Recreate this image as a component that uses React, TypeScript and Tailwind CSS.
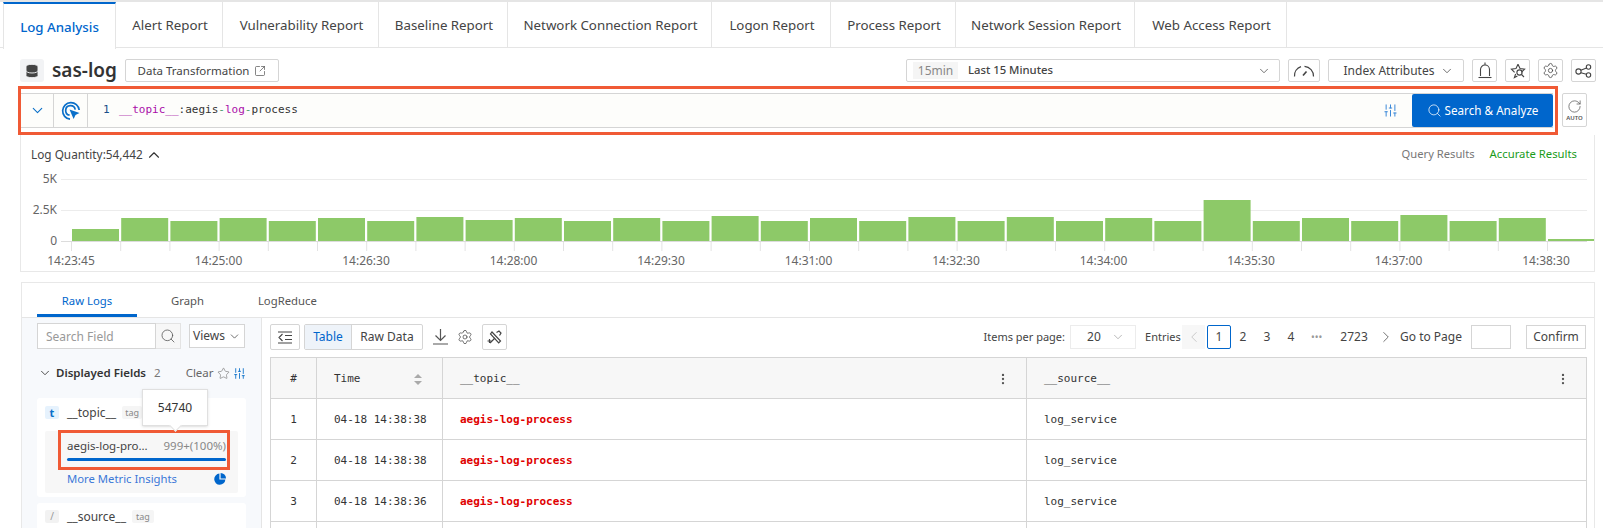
import { ChevronDown, ChevronLeft, ChevronRight, ChevronUp, Database, EllipsisVertical, Search, Settings, SlidersVertical, SquareArrowOutUpRight, Star, RotateCw } from 'lucide-react';

const ui = "font-['Noto_Sans',sans-serif]";
const mono = "font-['DejaVu_Sans_Mono','Liberation_Mono',monospace]";

const tabs = [
  { label: 'Log Analysis', w: 'w-[113px]' },
  { label: 'Alert Report', w: 'w-[107px]' },
  { label: 'Vulnerability Report', w: 'w-[156px]' },
  { label: 'Baseline Report', w: 'w-[129px]' },
  { label: 'Network Connection Report', w: 'w-[204px]' },
  { label: 'Logon Report', w: 'w-[119px]' },
  { label: 'Process Report', w: 'w-[125px]' },
  { label: 'Network Session Report', w: 'w-[179px]' },
  { label: 'Web Access Report', w: 'w-[152px]' },
];

const barHeights = [12, 23, 20, 23, 20, 23, 20, 24, 21, 23, 20, 23, 20, 25, 20, 23, 20, 24, 20, 24, 20, 23, 20, 41, 20, 23, 20, 26, 20, 23, 2];

const timeLabels = ['14:23:45', '14:25:00', '14:26:30', '14:28:00', '14:29:30', '14:31:00', '14:32:30', '14:34:00', '14:35:30', '14:37:00', '14:38:30'];

const rows = [
  { n: 1, time: '04-18 14:38:38' },
  { n: 2, time: '04-18 14:38:38' },
  { n: 3, time: '04-18 14:38:36' },
  { n: 4, time: '' },
];

function IconButton({ children, w = 'w-[25px]' }: { children: React.ReactNode; w?: string }) {
  return (
    <div className={`${w} h-[23px] flex items-center justify-center border border-[#d5d5d5] rounded-[2px] text-[#444]`}>
      {children}
    </div>
  );
}

function TargetCursor() {
  return (
    <svg width="20" height="20" viewBox="0 0 20 20" fill="none" stroke="#0a6fc9" strokeWidth="1.7">
      <path d="M9 18.2A8.3 8.3 0 1 1 18.2 9" />
      <path d="M8.6 14.2A4.8 4.8 0 1 1 14.2 8.6" />
      <path d="M8.5 8.5l10 3.6-4 1.8-1.9 4z" fill="#0a6fc9" stroke="none" />
    </svg>
  );
}

function GaugeIcon() {
  return (
    <svg width="22" height="14" viewBox="0 0 22 14" fill="none" stroke="#444" strokeWidth="1.2">
      <path d="M1.5 12.5A9.7 9.7 0 0 1 8 2.6M11.5 2.3A9.7 9.7 0 0 1 20.5 12.5" />
      <path d="M10 11.5l3.5-4" strokeWidth="1.7" />
    </svg>
  );
}

function BellIcon() {
  return (
    <svg width="14" height="17" viewBox="0 0 14 17" fill="none" stroke="#444" strokeWidth="1.1">
      <path d="M7 .5v2M2.5 14V7.5a4.5 4.5 0 0 1 9 0V14" />
      <path d="M.5 15.5h13" />
    </svg>
  );
}

function StarSearch() {
  return (
    <svg width="16" height="16" viewBox="0 0 16 16" fill="none" stroke="#444" strokeWidth="1.1">
      <path d="M8 1.2l2 4.3 4.6.6-3.3 3.2M5.6 11l-1.2 3.5 3-1.6M4.6 9.3L1.4 6.1 6 5.5 8 1.2" />
      <circle cx="9.5" cy="9.5" r="2.6" />
      <path d="M11.5 11.5l2.5 2.5" />
    </svg>
  );
}

function ShareIcon() {
  return (
    <svg width="17" height="14" viewBox="0 0 17 14" fill="none" stroke="#444" strokeWidth="1.1">
      <circle cx="3.5" cy="7.5" r="2.6" />
      <circle cx="13.5" cy="3" r="2.2" />
      <circle cx="13.5" cy="11" r="2.2" />
      <path d="M5.8 6.3l5.7-2.4M5.9 8.7l5.5 1.6" />
    </svg>
  );
}

function CollapseIcon() {
  return (
    <svg width="14" height="13" viewBox="0 0 14 13" fill="none" stroke="#444" strokeWidth="1.1">
      <path d="M0 1h14M0 12h14M7 4.5h7M7 8.5h7M4.5 3L1 6.5 4.5 10" />
    </svg>
  );
}

function DownloadIcon() {
  return (
    <svg width="15" height="16" viewBox="0 0 15 16" fill="none" stroke="#555" strokeWidth="1.2">
      <path d="M7.5 0v11M2.5 6.5l5 5 5-5M0 15h15" />
    </svg>
  );
}

function ToolsIcon() {
  return (
    <svg width="15" height="15" viewBox="0 0 15 15" fill="none" stroke="#444" strokeWidth="1.2">
      <path d="M5 2l8.5 9-1.8 1.8L3.5 4z" />
      <path d="M9.5 2.5l2.5-1.5 2 2-1.5 2.5M3 13l5-5" />
      <path d="M2.5 9v4M.5 11h4" />
    </svg>
  );
}

function Chart() {
  return (
    <svg width="1573" height="103" viewBox="0 0 1573 103" className="block">
      {[0, 31, 62].map((y) => (
        <line key={y} x1="40" x2="1566" y1={y + 10.5} y2={y + 10.5} stroke={y === 62 ? '#dcdcdc' : '#ececec'} />
      ))}
      {['5K', '2.5K', '0'].map((t, i) => (
        <text key={t} x="36" y={[14, 45, 76][i]} textAnchor="end" fontSize="12" fill="#666" fontFamily="Noto Sans">
          {t}
        </text>
      ))}
      {barHeights.map((h, i) => (
        <rect key={i} x={51 + i * 49.2} y={72 - h} width="47" height={h} fill="#8dc968" />
      ))}
      {barHeights.map((_, i) => (
        <line key={i} x1={50.5 + i * 49.2} x2={50.5 + i * 49.2} y1="73" y2="82" stroke="#e3e3e3" />
      ))}
      {timeLabels.map((t, i) => (
        <text key={t} x={50 + i * 147.5} y="96" textAnchor="middle" fontSize="12" fill="#666" fontFamily="Noto Sans">
          {t}
        </text>
      ))}
    </svg>
  );
}

function Sidebar() {
  return (
    <div className="w-[240px] h-full bg-[#f7f9fc] border-r border-[#e5e5e5] pl-[15px] pr-[15px] shrink-0">
      <div className="flex pt-[5px]">
        <div className="w-[119px] h-[26px] bg-white border border-[#d5d5d5] pl-[8px] text-[12px] leading-[25px] text-[#999]">Search Field</div>
        <div className="w-[25px] h-[26px] bg-[#f7f7f7] border border-l-0 border-[#e3e3e3] flex items-center justify-center">
          <Search size={16} strokeWidth={1.2} color="#555" />
        </div>
        <div className="ml-[8px] mt-[1px] w-[56px] h-[24px] bg-white border border-[#d5d5d5] flex items-center justify-center gap-[3px] text-[12px] text-[#444]">
          Views <ChevronDown size={13} strokeWidth={1.4} />
        </div>
      </div>
      <div className="flex items-center h-[20px] mt-[14px] text-[11.5px] whitespace-nowrap">
        <ChevronDown size={14} strokeWidth={1.6} color="#444" className="ml-[1px]" />
        <span className="ml-[4px] font-semibold text-[#333]">Displayed Fields</span>
        <span className="ml-[8px] text-[#777]">2</span>
        <span className="ml-[25px] text-[#666]">Clear</span>
        <Star size={13} strokeWidth={1.2} color="#777" className="ml-[3px]" />
        <SlidersVertical size={13} strokeWidth={1.6} color="#0a6fc9" className="ml-[3px]" />
      </div>
      <div className="relative mt-[15px] h-[99px] bg-white rounded-[3px] pl-[8px] pr-[8px] pt-[8px]">
        <div className="flex items-center h-[13px] text-[12px] text-[#444]">
          <span className="w-[14px] h-[13px] rounded-[2px] bg-[#e6f2fd] text-[#0a6fc9] font-bold text-[11px] leading-[13px] text-center">t</span>
          <span className="ml-[8px]">__topic__</span>
          <span className="ml-[6px] px-[3px] bg-[#f5f5f5] rounded-[2px] text-[9px] leading-[13px] text-[#888]">tag</span>
        </div>
        <div className="relative mt-[12px] h-[62px] bg-[#f7f7f7] rounded-[2px] pl-[22px] pr-[12px]">
          <div className="flex justify-between h-[27px] items-center pt-[3px] text-[11.5px] text-[#555]">
            <span className="text-[#444]">aegis-log-pro...</span>
            <span className="text-[#888]">999+(100%)</span>
          </div>
          <div className="h-[3px] bg-[#0066cc] rounded-full" />
          <div className="flex justify-between items-center mt-[10px] text-[11.3px] text-[#3b78d8]">
            <span>More Metric Insights</span>
            <svg width="12" height="12" viewBox="0 0 12 12" fill="#0066cc">
              <path d="M5.4.6A5.6 5.6 0 1 0 11.4 6.6H5.4z" />
              <path d="M6.6 0A5.4 5.4 0 0 1 12 5.4H6.6z" />
            </svg>
          </div>
          <div className="absolute left-[13px] top-[-1px] w-[172px] h-[40px] border-[3px] border-[#f05a35]" />
        </div>
        <div className="absolute left-[105px] top-[-9px] w-[66px] h-[37px] bg-white border border-[#e0e0e0] shadow-sm flex items-center justify-center text-[12px] text-[#333]">
          54740
          <span className="absolute left-[28px] bottom-[-5px] w-[9px] h-[9px] rotate-45 bg-white border-r border-b border-[#e0e0e0]" />
        </div>
      </div>
      <div className="mt-[6px] h-[40px] bg-white rounded-[3px] pl-[8px] pt-[7px]">
        <div className="flex items-center h-[13px] text-[12px] text-[#444]">
          <span className="w-[14px] h-[13px] rounded-[2px] bg-[#f2f2f2] text-[#999] text-[10px] leading-[13px] text-center">/</span>
          <span className="ml-[8px]">__source__</span>
          <span className="ml-[6px] px-[4px] bg-[#f5f5f5] rounded-[2px] text-[9px] leading-[13px] text-[#888]">tag</span>
        </div>
      </div>
    </div>
  );
}

function Pagination() {
  return (
    <div className="ml-auto flex items-center text-[12px] text-[#444] h-[24px] mr-[8px]">
      <span className="text-[11px]">Items per page:</span>
      <div className="ml-[5px] w-[66px] h-[24px] border border-[#ececec] flex items-center justify-between pl-[16px] pr-[10px]">
        20 <ChevronDown size={14} strokeWidth={1} color="#888" />
      </div>
      <span className="ml-[9px] w-[37px] text-[11px]">Entries</span>
      <div className="ml-[0px] w-[23px] h-[24px] bg-[#f7f7f7] flex items-center justify-center">
        <ChevronLeft size={18} strokeWidth={1} color="#bbb" />
      </div>
      <div className="ml-[2px] w-[24px] h-[24px] border border-[#0066cc] rounded-[2px] text-center leading-[22px]">1</div>
      <span className="w-[24px] text-center">2</span>
      <span className="w-[24px] text-center">3</span>
      <span className="w-[24px] text-center">4</span>
      <span className="w-[27px] text-center text-[#999] text-[10px]">•••</span>
      <span className="ml-[9px] w-[30px] text-center">2723</span>
      <ChevronRight size={18} strokeWidth={1.1} color="#555" className="ml-[8px]" />
      <span className="ml-[5px]">Go to Page</span>
      <div className="ml-[9px] w-[40px] h-[24px] border border-[#d5d5d5]" />
      <div className="ml-[15px] w-[60px] h-[24px] border border-[#d5d5d5] text-center leading-[22px]">Confirm</div>
    </div>
  );
}

function LogTable() {
  return (
    <table className={`${mono} table-fixed border-collapse w-[1316px] mt-[7px] text-[11px] text-[#333]`}>
      <colgroup>
        <col className="w-[46px]" />
        <col className="w-[126px]" />
        <col className="w-[584px]" />
        <col className="w-[560px]" />
      </colgroup>
      <thead>
        <tr className="h-[41px] bg-[#f7f7f7] text-left">
          <th className="border border-[#d5d5d5] font-normal text-center pt-[2px]">#</th>
          <th className="border border-[#d5d5d5] font-normal pl-[17px] pt-[2px]">
            <div className="flex items-center justify-between pr-[20px]">
              Time
              <svg width="8" height="11" viewBox="0 0 8 11" fill="#aaa">
                <path d="M4 0l4 4H0zM4 11L0 7h8z" />
              </svg>
            </div>
          </th>
          <th className="border border-[#d5d5d5] font-normal pl-[17px] pt-[2px]">
            <div className="flex items-center justify-between pr-[16px]">
              __topic__
              <EllipsisVertical size={14} color="#555" />
            </div>
          </th>
          <th className="border border-[#d5d5d5] font-normal pl-[17px] pt-[2px]">
            <div className="flex items-center justify-between pr-[16px]">
              __source__
              <EllipsisVertical size={14} color="#555" />
            </div>
          </th>
        </tr>
      </thead>
      <tbody>
        {rows.map((r) => (
          <tr key={r.n} className="h-[41px]">
            <td className="border border-[#d5d5d5] text-center pt-[2px]">{r.time ? r.n : ''}</td>
            <td className="border border-[#d5d5d5] pl-[17px] pt-[2px]">{r.time}</td>
            <td className="border border-[#d5d5d5] pl-[17px] pt-[2px] font-bold text-[#e00000]">{r.time ? 'aegis-log-process' : ''}</td>
            <td className="border border-[#d5d5d5] pl-[17px] pt-[2px]">{r.time ? 'log_service' : ''}</td>
          </tr>
        ))}
      </tbody>
    </table>
  );
}

export default function App() {
  return (
    <div className={`${ui} w-[1603px] h-[528px] overflow-hidden bg-white text-[#333]`}>
      {/* report tabs */}
      <div className="h-[48px] flex border-t-2 border-b border-t-[#e5e5e5] border-b-[#e5e5e5] pl-[3px] text-[13.3px] text-[#444]">
        {tabs.map((t, i) => (
          <div
            key={t.label}
            className={`${t.w} flex items-center justify-center pt-[2px] border-r border-[#e5e5e5] ${i === 0 ? 'border-t-2 border-t-[#0066cc] border-l text-[#0066cc] bg-white h-[47px] font-medium' : 'pl-[2px]'}`}
          >
            {t.label}
          </div>
        ))}
      </div>

      {/* logstore header */}
      <div className="flex items-center h-[23px] mt-[11px] pl-[20px] pr-[7px]">
        <div className="w-[24px] h-[23px] bg-[#f2f3f5] rounded-[3px] flex items-center justify-center shrink-0">
          <Database size={16} fill="#444" color="#f2f3f5" strokeWidth={1.4} />
        </div>
        <span className="ml-[8px] w-[64px] text-[19px] font-semibold text-[#333] leading-none whitespace-nowrap">sas-log</span>
        <div className="ml-[9px] w-[154px] h-[23px] border border-[#d5d5d5] rounded-[2px] flex items-center justify-center gap-[5px] text-[11.5px] text-[#444]">
          Data Transformation <SquareArrowOutUpRight size={12} strokeWidth={1.3} />
        </div>
        <div className="ml-[627px] w-[374px] h-[23px] border border-[#d5d5d5] rounded-[2px] flex items-center pl-[6px] pr-[8px] text-[12px]">
          <span className="w-[45px] h-[17px] bg-[#f5f5f5] text-[#888] text-center leading-[17px]">15min</span>
          <span className="ml-[10px] text-[11.3px] font-medium text-[#444]">Last 15 Minutes</span>
          <ChevronDown size={14} strokeWidth={1.4} color="#555" className="ml-auto" />
        </div>
        <IconButton w="w-[32px] ml-[8px]"><GaugeIcon /></IconButton>
        <div className="ml-[8px] w-[136px] h-[23px] border border-[#d5d5d5] rounded-[2px] flex items-center justify-center gap-[6px] pl-[6px] text-[12px] text-[#444]">
          Index Attributes <ChevronDown size={14} strokeWidth={1.3} />
        </div>
        <IconButton w="w-[25px] ml-[8px]"><BellIcon /></IconButton>
        <IconButton w="w-[25px] ml-[8px]"><StarSearch /></IconButton>
        <IconButton w="w-[25px] ml-[8px]"><Settings size={17} strokeWidth={1.1} /></IconButton>
        <IconButton w="w-[25px] ml-[8px]"><ShareIcon /></IconButton>
      </div>

      {/* query bar */}
      <div className="flex items-start mt-[4px] ml-[18px]">
        <div className="w-[1540px] h-[49px] border-[3px] border-[#f05a35] pt-[4px]">
          <div className="flex items-stretch h-[35px] border-y border-[#d5d5d5] bg-[#fdfdfb] mr-[2px]">
            <div className="w-[33px] flex items-center justify-center border-r border-[#d5d5d5]">
              <ChevronDown size={17} strokeWidth={1.5} color="#0a6fc9" />
            </div>
            <div className="w-[34px] flex items-center justify-center border-r border-[#d5d5d5]">
              <TargetCursor />
            </div>
            <div className={`${mono} flex items-center pl-[15px] text-[11px] text-[#333]`}>
              <span className="w-[16px] text-[#1a4f8a]">1</span>
              <span className="text-[#aa0da9]">__topic__</span>:aegis
              <span className="text-[#4b9b6f]">-</span>
              <span className="text-[#aa0da9]">log</span>
              <span className="text-[#4b9b6f]">-</span>process
            </div>
            <div className="ml-auto flex items-center pr-[14px]">
              <SlidersVertical size={15} strokeWidth={1.6} color="#3b88d8" />
            </div>
            <div className="w-[141px] bg-[#0066cc] text-white rounded-[2px] flex items-center justify-center gap-[3px] text-[11.7px]">
              <Search size={15} strokeWidth={1.2} /> Search &amp; Analyze
            </div>
          </div>
        </div>
        <div className="ml-[4px] mt-[7px] w-[25px] h-[34px] border border-[#d5d5d5] rounded-[2px] flex flex-col items-center justify-center text-[#555]">
          <RotateCw size={15} strokeWidth={1.2} />
          <span className="text-[6px] leading-[8px] font-semibold">AUTO</span>
        </div>
      </div>

      {/* histogram */}
      <div className="ml-[20px] w-[1575px] h-[137px] border border-t-0 border-[#e8e8e8]">
        <div className="flex items-center h-[34px] pl-[10px] pr-[17px] pt-[5px] text-[11.8px]">
          <span className="text-[#444]">Log Quantity:54,442</span>
          <ChevronUp size={18} strokeWidth={1.5} color="#333" className="ml-[2px]" />
          <span className="ml-auto text-[11.2px] text-[#777]">Query Results</span>
          <span className="ml-[15px] text-[11.3px] text-[#1a9c1a]">Accurate Results</span>
        </div>
        <Chart />
      </div>

      {/* results */}
      <div className="ml-[21px] mt-[10px] w-[1574px] border border-b-0 border-[#e8e8e8] h-[246px]">
        <div className="flex h-[35px] border-b border-[#e5e5e5] text-[11.3px] text-[#555]">
          <div className="ml-[15px] w-[100px] h-[34px] border-b-[3px] border-[#0066cc] text-center leading-[36px] text-[#0066cc]">Raw Logs</div>
          <div className="ml-[34px] leading-[36px]">Graph</div>
          <div className="ml-[54px] leading-[36px]">LogReduce</div>
        </div>
        <div className="flex h-[211px]">
          <Sidebar />
          <div className="pl-[8px] pt-[6px] flex-1 min-w-0">
            <div className="flex items-center h-[26px] text-[12px]">
              <div className="w-[30px] h-[26px] border border-[#d5d5d5] rounded-[2px] flex items-center justify-center text-[#444]">
                <CollapseIcon />
              </div>
              <div className="ml-[4px] flex h-[26px] border border-[#d5d5d5] rounded-[2px]">
                <div className="w-[47px] bg-[#eef3f9] text-[#0066cc] text-center leading-[24px] border-r border-[#d5d5d5]">Table</div>
                <div className="w-[70px] text-center leading-[24px] text-[#444]">Raw Data</div>
              </div>
              <div className="ml-[10px] flex"><DownloadIcon /></div>
              <Settings size={16} strokeWidth={1.1} color="#444" className="ml-[9px]" />
              <div className="ml-[9px] w-[25px] h-[26px] border border-[#d5d5d5] rounded-[2px] flex items-center justify-center">
                <ToolsIcon />
              </div>
              <Pagination />
            </div>
            <LogTable />
          </div>
        </div>
      </div>
    </div>
  );
}
